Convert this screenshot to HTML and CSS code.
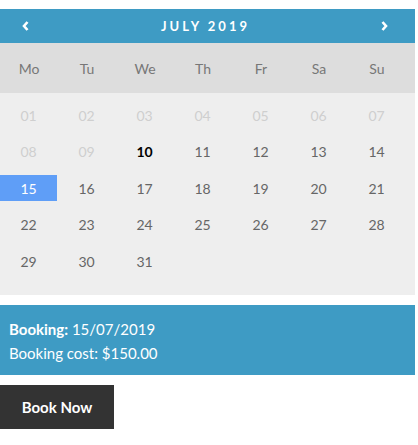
FILE: index.html
```html
<!DOCTYPE html>
<html lang="en">
<head>
    <meta charset="UTF-8">
    <title>Booking Calendar</title>
    <link rel="stylesheet" href="styles.css">
</head>
<body>
    <div class="booking">
        <div class="calendar">
            <div class="cal-header">
                <svg class="nav" width="7" height="10" viewBox="0 0 7 10"><path d="M5.5 1 L2 5 L5.5 9" fill="none" stroke="#fff" stroke-width="2.6"/></svg>
                <span class="month">July 2019</span>
                <svg class="nav" width="7" height="10" viewBox="0 0 7 10"><path d="M1.5 1 L5 5 L1.5 9" fill="none" stroke="#fff" stroke-width="2.6"/></svg>
            </div>

            <div class="weekdays">
                <span>Mo</span><span>Tu</span><span>We</span><span>Th</span><span>Fr</span><span>Sa</span><span>Su</span>
            </div>

            <div class="days">
                <span class="past">01</span><span class="past">02</span><span class="past">03</span><span class="past">04</span><span class="past">05</span><span class="past">06</span><span class="past">07</span>
                <span class="past">08</span><span class="past">09</span><span class="today">10</span><span>11</span><span>12</span><span>13</span><span>14</span>
                <span class="selected">15</span><span>16</span><span>17</span><span>18</span><span>19</span><span>20</span><span>21</span>
                <span>22</span><span>23</span><span>24</span><span>25</span><span>26</span><span>27</span><span>28</span>
                <span>29</span><span>30</span><span>31</span>
            </div>
        </div>

        <div class="summary">
            <p><strong>Booking:</strong> 15/07/2019</p>
            <p>Booking cost: $150.00</p>
        </div>

        <button class="book-btn">Book Now</button>
    </div>
</body>
</html>
```

FILE: styles.css
```css
/* Base */
* {
    margin: 0;
    padding: 0;
    box-sizing: border-box;
}

body {
    font-family: 'Lato', 'Open Sans', sans-serif;
    background: #fff;
    padding-top: 9px;
}

.booking {
    width: 415px;
}

/* En-tête du calendrier */
.cal-header {
    height: 34px;
    background: #3e9bc4;
    color: #fff;
    display: flex;
    align-items: center;
    justify-content: space-between;
    padding: 0 27px 0 22px;
}

.nav {
    display: block;
    margin-top: -1px;
}

.month {
    text-transform: uppercase;
    letter-spacing: 3px;
    font-size: 13px;
    font-weight: 700;
    margin-left: 1px;
}

/* Jours de la semaine */
.weekdays {
    height: 50px;
    background: #dddddd;
    display: grid;
    grid-template-columns: repeat(7, 58px);
    align-items: center;
    justify-items: center;
    color: #777;
    font-size: 14px;
}

/* Grille des jours */
.days {
    background: #eeeeee;
    display: grid;
    grid-template-columns: repeat(7, 58px);
    grid-auto-rows: 26px;
    row-gap: 10.5px;
    padding: 9px 0 21px;
    color: #666;
    font-size: 14px;
}

.days span {
    display: flex;
    align-items: center;
    justify-content: center;
    width: 57px;
}

.days .past {
    color: #cfcfcf;
}

.days .today {
    color: #000;
    font-weight: 700;
}

.days .selected {
    background: #5f9ef7;
    color: #fff;
}

/* Récapitulatif */
.summary {
    margin-top: 10px;
    background: #3e9bc4;
    color: #fff;
    padding: 12px 9px 13px;
    font-size: 15px;
    line-height: 24px;
    height: 70px;
}

.book-btn {
    margin-top: 10px;
    width: 114px;
    height: 44px;
    background: #333;
    color: #fff;
    border: none;
    font-family: inherit;
    font-size: 15px;
    font-weight: 700;
}
```
